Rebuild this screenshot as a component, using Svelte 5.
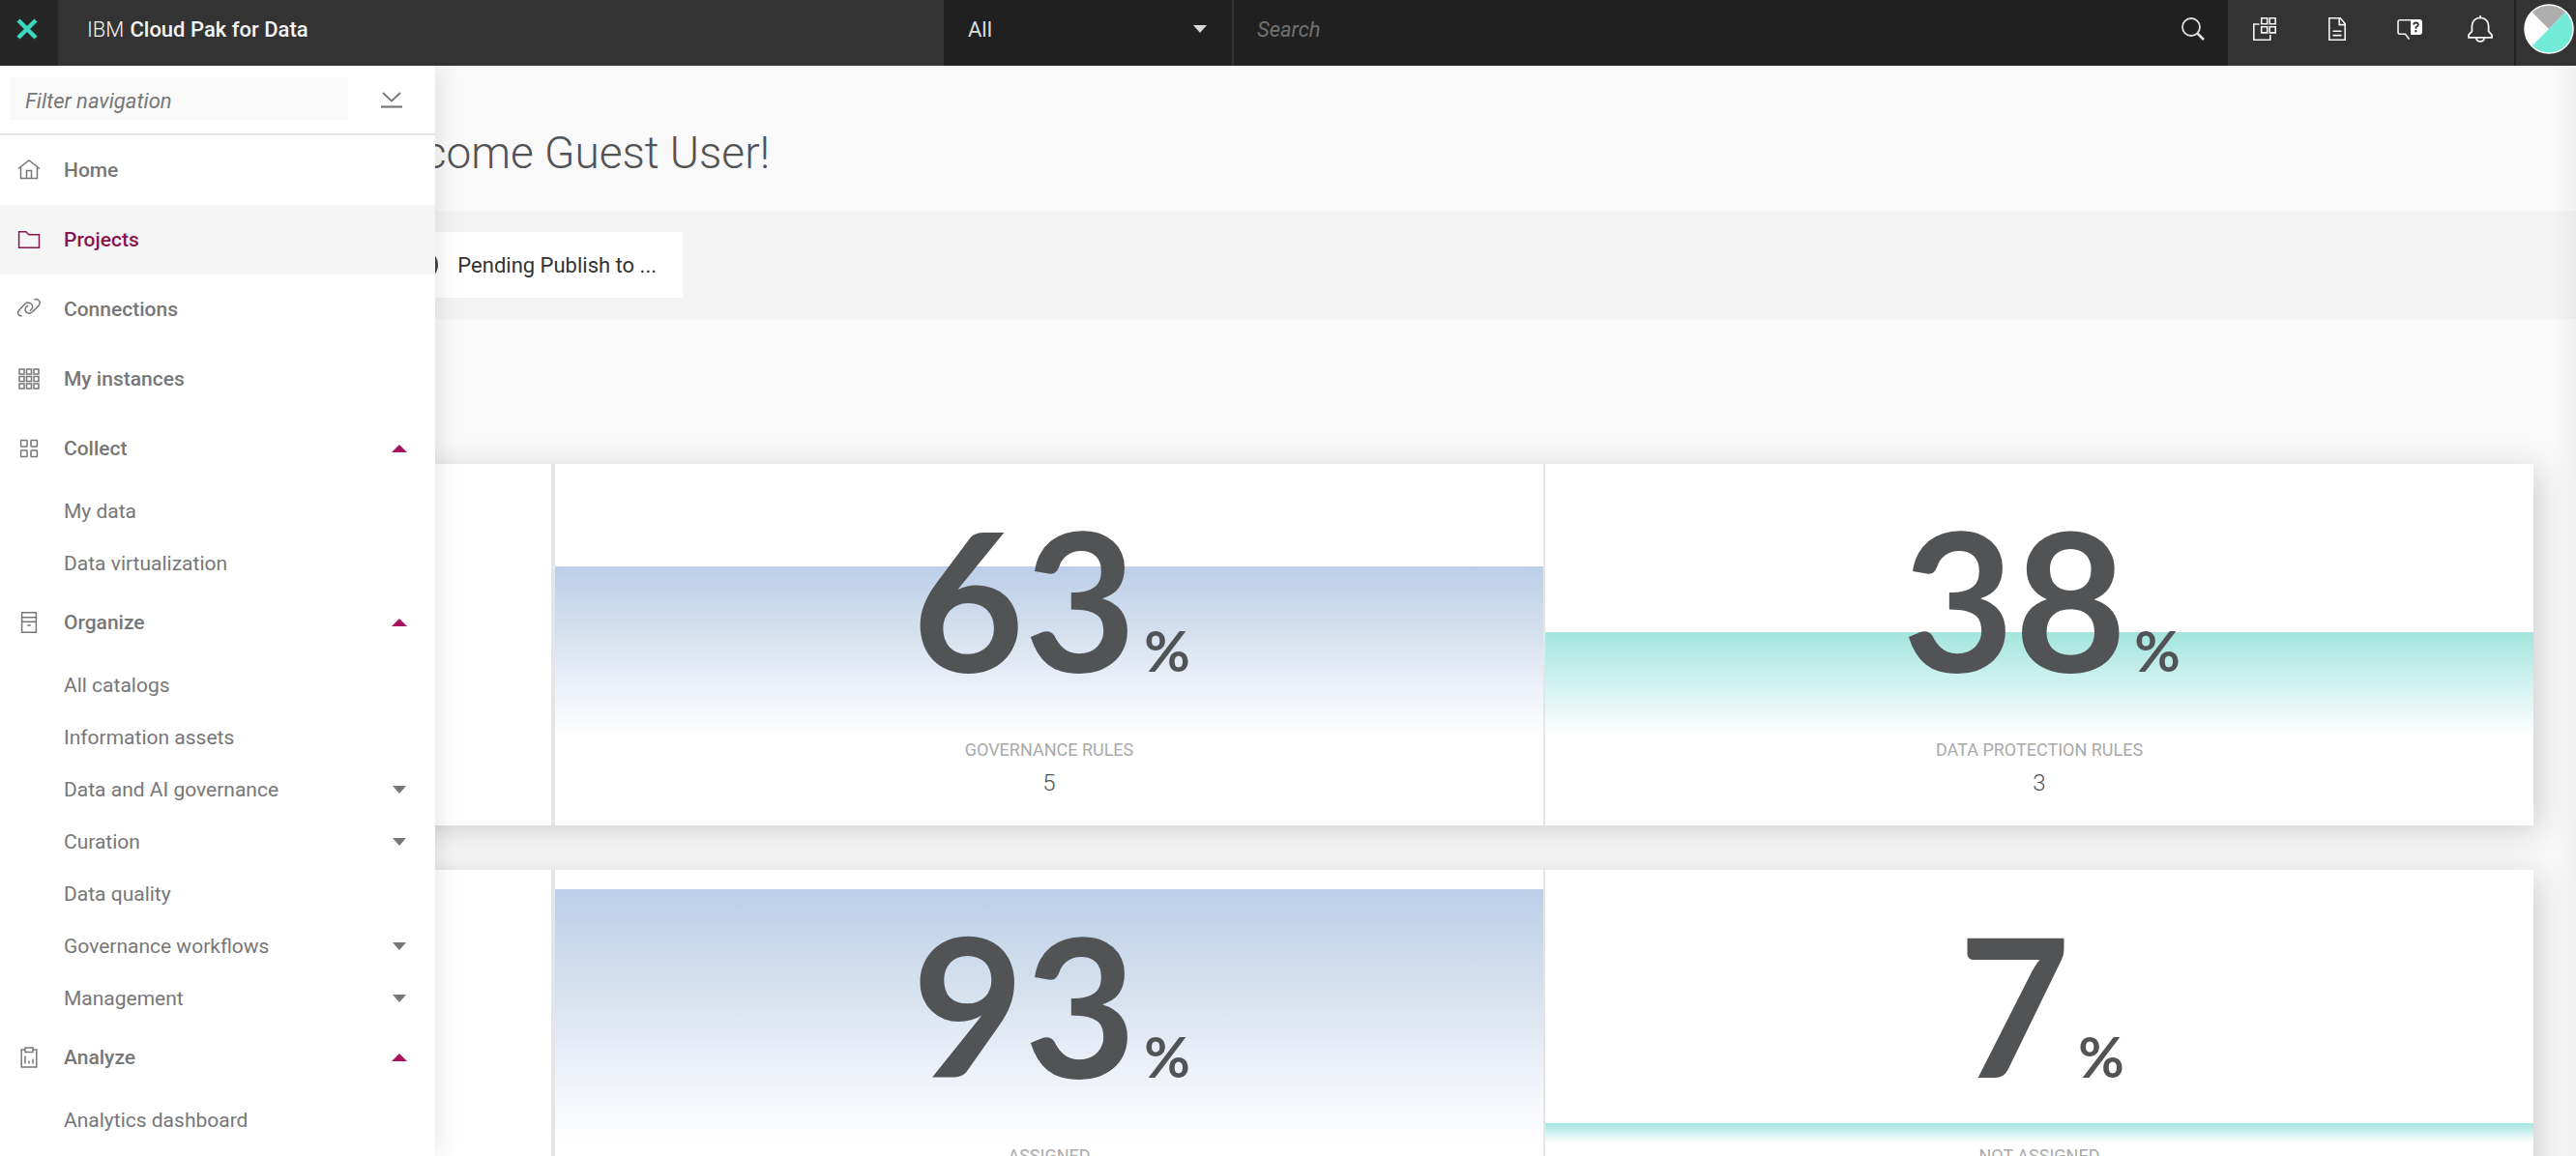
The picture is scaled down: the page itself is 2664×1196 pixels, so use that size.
<script>
  const nav = [
    { label: 'Home', icon: 'home' },
    { label: 'Projects', icon: 'folder', active: true },
    { label: 'Connections', icon: 'link' },
    { label: 'My instances', icon: 'grid' },
    { label: 'Collect', icon: 'tiles', children: [{ label: 'My data' }, { label: 'Data virtualization' }] },
    {
      label: 'Organize',
      icon: 'cabinet',
      children: [
        { label: 'All catalogs' },
        { label: 'Information assets' },
        { label: 'Data and AI governance', more: true },
        { label: 'Curation', more: true },
        { label: 'Data quality' },
        { label: 'Governance workflows', more: true },
        { label: 'Management', more: true }
      ]
    },
    { label: 'Analyze', icon: 'report', children: [{ label: 'Analytics dashboard' }] }
  ];

  const cards = [
    [
      { value: 63, label: 'Governance rules', count: 5, fill: 176, tone: 'blue' },
      { value: 38, label: 'Data protection rules', count: 3, fill: 108, tone: 'teal' }
    ],
    [
      { value: 93, label: 'Assigned', count: 40, fill: 262, tone: 'blue' },
      { value: 7, label: 'Not assigned', count: 3, fill: 20, tone: 'teal' }
    ]
  ];

  const cells = [0, 1, 2, 3, 4, 5, 6, 7, 8];
</script>

{#snippet icon(name)}
  <svg class="icon" viewBox="0 0 24 24" width="24" height="24" aria-hidden="true">
    {#if name === 'home'}
      <path d="M1 10.500L12 2l11 8.500M3.500 9v11.500h17V9M9.500 20.500v-8h5v8" />
    {:else if name === 'folder'}
      <path d="M1.600 3.700h7.200l3 3h10.700v13.600H1.600z" />
    {:else if name === 'link'}
      <path d="M4.800 18.600C1.600 19.700-.8 16 1.500 13.200L8 6.300c3-2.700 8.200-.5 7.600 3.800-.2 1.500-1.400 2.700-2.800 3.600" />
      <path d="M17.400 2.100c3.600-1.800 6.800 1.800 5.400 4.800-1 2-5.600 6-7.500 7.900-3.300 3-8 .4-7.100-3.600.4-1.700 1.600-2.500 2.900-3.300" />
    {:else if name === 'grid'}
      {#each cells as c}
        <rect x={2 + (c % 3) * 7.500} y={2 + Math.floor(c / 3) * 7.500} width="5" height="5" />
      {/each}
    {:else if name === 'tiles'}
      <rect x="3.600" y="3.600" width="6.400" height="6.400" rx=".5" />
      <rect x="14" y="3.600" width="6.400" height="6.400" rx=".5" />
      <rect x="3.600" y="14" width="6.400" height="6.400" rx=".5" />
      <rect x="14" y="14" width="6.400" height="6.400" rx=".5" />
    {:else if name === 'cabinet'}
      <path d="M4.600 1.800h14.800v20.400H4.600zM4.600 6.800h14.800M4.600 11.300h14.800M10.200 15h3.600" />
    {:else if name === 'report'}
      <path d="M8 4H4.200v18h15.600V4H16M8 2h8v4.500H8zM8 10.500v8M12 15.500v3M16 13.500v5" />
    {/if}
  </svg>
{/snippet}

<div class="shell">
  <header>
    <button class="menu" aria-label="Close navigation">
      <svg viewBox="0 0 24 24" width="24" height="24"><path d="M3 3l18 18M21 3L3 21" stroke="#3bd8c0" stroke-width="4.500" /></svg>
    </button>
    <a class="brand" href="#home">IBM <strong>Cloud Pak for Data</strong></a>
    <div class="scope">
      <select aria-label="Search scope"><option>All</option></select>
      <svg viewBox="0 0 14 8" width="14" height="8"><path d="M0 0h14L7 8z" fill="#d8d8d8" /></svg>
    </div>
    <div class="search">
      <input type="search" placeholder="Search" aria-label="Search" />
      <button aria-label="Run search">
        <svg viewBox="0 0 24 24" width="24" height="24" fill="none" stroke="#ddd"><circle cx="10" cy="10" r="9" stroke-width="1.800" /><path d="M16.500 16.500L23 23" stroke-width="2.600" /></svg>
      </button>
    </div>
    <div class="tools">
      <button aria-label="App switcher">
        <svg viewBox="0 0 24 24" width="24" height="24"><path d="M8.700.8h6v6h-6zM17.200.8h6v6h-6zM8.700 9.700h6v6.200h-6zM17.200 9.700h6v6.200h-6zM6.500 7H.8v16.200h17V18" /></svg>
      </button>
      <button aria-label="Documents">
        <svg viewBox="0 0 24 24" width="24" height="24"><path d="M3.800.8h11.400l5 5.800v16.600H3.800zM14.200.8v6.800h6M7.500 14.200h9M7.500 18.600h9" /></svg>
      </button>
      <button aria-label="Help">
        <svg viewBox="0 0 26 24" width="26" height="24"><path d="M14 2.800H3Q1 2.800 1 4.800v10.400q0 2 2 2h5.500l4 5.300" /><path d="M14 2h9q3 0 3 3v10q0 3-3 3h-9z" fill="#fff" stroke="none" /><path d="M17 7.500q.3-2 2.400-2 2.400 0 2.400 2.100 0 1.500-2.400 2.600v1.600M19.400 13v2.200" stroke="#333" stroke-width="1.800" /></svg>
      </button>
      <button aria-label="Notifications">
        <svg viewBox="0 0 26 28" width="26" height="28"><path d="M13 0v2.500M13 2.300c-5.200 0-8.600 3.800-8.600 8.600v5.600L1 20v2.800h24V20l-3.400-3.500v-5.600c0-4.800-3.400-8.600-8.600-8.600zM8.800 23c.3 5.200 8.100 5.200 8.400 0" stroke-width="1.800" /></svg>
      </button>
    </div>
    <button class="profile" aria-label="Profile">
      <svg viewBox="0 0 52 52" width="52" height="52">
        <circle cx="26" cy="26" r="25" fill="#fcfcfc" />
        <path d="M26 26L8.300 8.300a25 25 0 0 1 35.400 0z" fill="#adadad" />
        <path d="M43.700 8.300a25 25 0 0 1-35.400 35.400z" fill="#72ecd9" />
        <circle cx="26" cy="26" r="25" fill="none" stroke="#fff" stroke-width="1.500" />
      </svg>
    </button>
  </header>

  <div class="stage">
    <main>
      <h1>Welcome Guest User!</h1>
      <div class="tasks">
        <button class="task"><span class="dot"></span>Pending Publish to ...</button>
      </div>
      <div class="cards">
        {#each cards as row}
          <section class="card">
            <div class="lead"></div>
            <div class="tiles">
              {#each row as tile}
                <article class="tile {tile.tone}">
                  <div class="meter">
                    <div class="fill" style="height: {tile.fill}px"></div>
                    <p class="value">{tile.value}<span>%</span></p>
                  </div>
                  <p class="label">{tile.label}</p>
                  <p class="count">{tile.count}</p>
                </article>
              {/each}
            </div>
          </section>
        {/each}
      </div>
    </main>

    <aside>
      <div class="filter">
        <input type="text" placeholder="Filter navigation" aria-label="Filter navigation" />
        <button aria-label="Expand all">
          <svg viewBox="0 0 24 20" width="24" height="20" fill="none" stroke="#777" stroke-width="1.800"><path d="M3 2l9 8.500L21 2" /><path d="M1 16.500h22" stroke-width="2.200" /></svg>
        </button>
      </div>
      <nav aria-label="Main">
        <ul>
          {#each nav as item}
            <li>
              <a class="top" class:active={item.active} href="#{item.icon}">
                {@render icon(item.icon)}
                <span>{item.label}</span>
                {#if item.children}
                  <svg class="caret" viewBox="0 0 16 8" width="16" height="8"><path d="M0 8h16L8 0z" fill="#a8135f" /></svg>
                {/if}
              </a>
              {#if item.children}
                <ul>
                  {#each item.children as child}
                    <li>
                      <a class="sub" href="#{item.icon}">
                        <span>{child.label}</span>
                        {#if child.more}
                          <svg class="caret" viewBox="0 0 16 8" width="16" height="8"><path d="M1 0h14L8 8z" fill="#777" /></svg>
                        {/if}
                      </a>
                    </li>
                  {/each}
                </ul>
              {/if}
            </li>
          {/each}
        </ul>
      </nav>
    </aside>
  </div>
</div>

<style>
  :global(body) {
    margin: 0;
    font-family: Roboto, 'Liberation Sans', sans-serif;
    font-size: 22px;
  }
  * {
    box-sizing: border-box;
  }
  button,
  input,
  select {
    font: inherit;
    border: 0;
    border-radius: 0;
    margin: 0;
    padding: 0;
    background: none;
    outline: 0;
    appearance: none;
  }
  a {
    color: inherit;
    text-decoration: none;
  }
  ul {
    list-style: none;
    margin: 0;
    padding: 0;
  }
  h1,
  p {
    margin: 0;
  }
  svg {
    display: block;
    flex: none;
  }
  .shell {
    display: flex;
    flex-direction: column;
    height: 100vh;
    overflow: hidden;
  }
  header {
    display: flex;
    flex: none;
    height: 68px;
    background: #333;
    color: #f4f4f4;
  }
  header > * {
    padding-bottom: 8px;
  }
  .menu {
    display: flex;
    align-items: center;
    width: 60px;
    padding-left: 16px;
    background: #262626;
  }
  .brand {
    display: flex;
    flex: 1;
    align-items: center;
    gap: 6px;
    padding-left: 30px;
    font-weight: 300;
  }
  .brand strong {
    font-weight: 500;
  }
  .scope {
    display: flex;
    align-items: center;
    width: 300px;
    padding-right: 26px;
    border-right: 2px solid #333;
    background: #202020;
  }
  .scope select {
    flex: 1;
    min-width: 0;
    height: 100%;
    padding-left: 25px;
    color: #ddd;
  }
  .search {
    display: flex;
    width: 1028px;
    background: #202020;
  }
  .search input {
    flex: 1;
    padding-left: 24px;
    color: #ddd;
  }
  .search input::placeholder {
    color: #707070;
    font-style: italic;
    opacity: 1;
  }
  .search button {
    display: flex;
    align-items: center;
    padding: 0 24px;
  }
  .tools {
    display: flex;
    width: 296px;
  }
  .tools button {
    display: flex;
    align-items: center;
    justify-content: center;
    width: 75px;
  }
  .tools button:last-child {
    flex: 1;
  }
  .tools svg {
    fill: none;
    stroke: #f4f4f4;
    stroke-width: 1.600;
  }
  .profile {
    display: flex;
    align-items: center;
    justify-content: center;
    width: 64px;
    padding-left: 6px;
    border-left: 2px solid #202020;
  }
  .stage {
    position: relative;
    flex: 1;
    min-height: 0;
  }
  main {
    height: 100%;
    overflow: hidden;
    background: linear-gradient(to left, #f1f1f3, #f9f9f9 24px);
  }
  h1 {
    height: 150px;
    padding-top: 60px;
    padding-left: 363px;
    color: #525355;
    font-size: 46px;
    font-weight: 300;
    line-height: 60px;
  }
  .tasks {
    height: 112px;
    padding: 22px 44px;
    background: #00000006;
  }
  .task {
    display: flex;
    align-items: center;
    justify-content: flex-end;
    gap: 20px;
    width: 662px;
    height: 68px;
    padding-right: 27px;
    background: #fff;
    color: #323232;
  }
  .dot {
    width: 32px;
    height: 32px;
    border-radius: 50%;
    background: #444;
  }
  .cards {
    display: grid;
    gap: 46px;
    padding: 150px 44px 44px;
  }
  .card {
    display: flex;
    height: 374px;
    background: #fff;
    box-shadow: 6px 6px 32px #0000002b;
  }
  .lead {
    flex: none;
    width: 530px;
    border-right: 4px solid #e5e5e5;
  }
  .tiles {
    display: grid;
    flex: 1;
    grid-template-columns: 1fr 1fr;
    gap: 2px;
    background: #e5e5e5;
  }
  .tile {
    background: #fff;
    text-align: center;
  }
  .meter {
    display: flex;
    position: relative;
    align-items: flex-end;
    justify-content: center;
    height: 282px;
  }
  .fill {
    position: absolute;
    right: 0;
    bottom: 0;
    left: 0;
  }
  .blue .fill {
    background: linear-gradient(#bccfe8, #d6e2ef 42%, #e4eaf5 58%, #fff);
  }
  .teal .fill {
    background: linear-gradient(#a3e5dd, #cdf1ee 45%, #fff);
  }
  .value {
    position: relative;
    padding-left: 4px;
    padding-bottom: 30px;
    color: #525355;
    font-family: Lato, 'Liberation Sans', sans-serif;
    font-size: 200px;
    font-weight: 700;
    line-height: 118px;
  }
  .value span {
    padding-left: 8px;
    font-size: 58px;
  }
  .label {
    color: #aaa;
    font-size: 18px;
    line-height: 28px;
    text-transform: uppercase;
  }
  .count {
    padding-top: 4px;
    color: #525355;
    font-size: 24px;
    font-weight: 300;
    line-height: 32px;
  }
  aside {
    position: absolute;
    top: 0;
    bottom: 0;
    left: 0;
    width: 450px;
    overflow: hidden;
    background: #fff;
    box-shadow: 2px 0 24px #0000001c;
    clip-path: inset(0 -40px 0 0);
    color: #777;
  }
  .filter {
    display: flex;
    height: 72px;
    padding: 12px 0 14px 10px;
    border-bottom: 2px solid #e6e6e6;
  }
  .filter input {
    width: 350px;
    padding-left: 16px;
    padding-top: 4px;
    background: #f9f9f9;
    color: #555;
  }
  .filter input::placeholder {
    color: #777;
    font-style: italic;
    opacity: 1;
  }
  .filter button {
    display: flex;
    flex: 1;
    align-items: center;
    justify-content: center;
    padding-top: 4px;
  }
  .top,
  .sub {
    display: flex;
    align-items: center;
    padding-right: 29px;
    font-size: 21px;
  }
  .top {
    gap: 24px;
    height: 72px;
    padding-left: 18px;
    font-weight: 500;
  }
  .top.active {
    background: #f5f5f5;
    color: #8a1550;
  }
  .sub {
    height: 54px;
    padding-top: 4px;
    padding-left: 66px;
  }
  .icon {
    fill: none;
    stroke: currentColor;
    stroke-width: 1.500;
  }
  .caret {
    margin-left: auto;
  }
</style>
